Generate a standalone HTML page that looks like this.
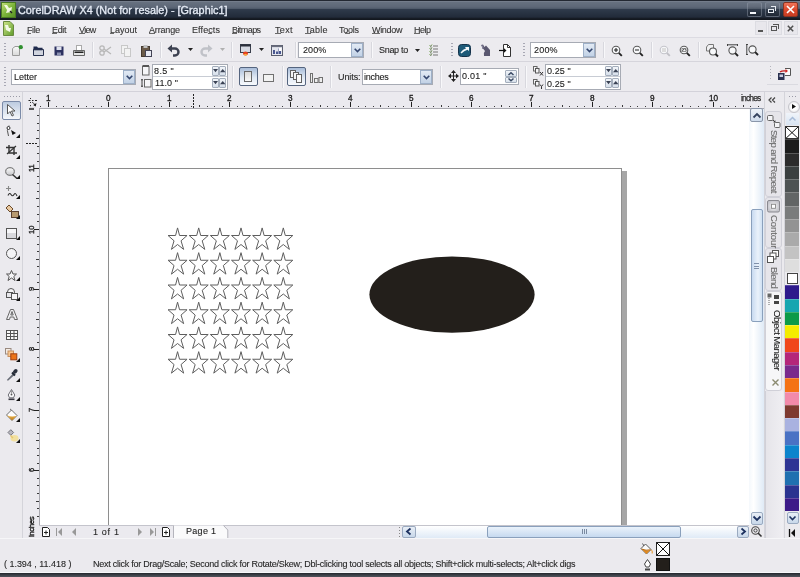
<!DOCTYPE html><html><head><meta charset="utf-8"><style>
*{box-sizing:border-box}
html,body{margin:0;padding:0}
body{width:800px;height:577px;overflow:hidden;position:relative;background:#ebeaee;font-family:"Liberation Sans",sans-serif;font-size:9px;color:#000}
.ab{position:absolute}
.t{position:absolute;white-space:nowrap;line-height:1;-webkit-font-smoothing:antialiased;will-change:transform;-webkit-text-stroke-width:0.1px}
svg{position:absolute;overflow:visible}
</style></head><body>
<div class="ab" style="left:0px;top:0px;width:800px;height:20px;background:linear-gradient(#232832 0,#232832 1px,#7b8391 1px,#66707f 2.5px,#5d6777 7px,#505b6b 8.5px,#2f3a4b 9.5px,#2a3545 12px,#222b3a 17px,#161b24 18.5px,#12161d 20px)"></div>
<div class="ab" style="left:1px;top:2px;width:15px;height:16px;background:linear-gradient(135deg,#c3e07a,#7cb43a 50%,#5a9428);border:1px solid #4a7a22"></div>
<svg style="left:3px;top:4px" width="11" height="11" viewBox="0 0 11 11"><path d="M1 1 L4 1 L6 4 L9 3 L8 8 L3 9 L4 6z" fill="#f2f9e0"/><path d="M7 7 L9 9" stroke="#222" stroke-width="1.5"/></svg>
<div class="t" style="left:17.50px;top:5.30px;font-size:10.8px;color:#e4eaf4;letter-spacing:0.012px;font-weight:normal;-webkit-text-stroke:0.35px #e4eaf4">CorelDRAW X4 (Not for resale) - [Graphic1]</div>
<div class="ab" style="left:747px;top:2px;width:15px;height:15px;border:1px solid rgba(150,160,175,0.45);border-radius:2px;background:linear-gradient(rgba(255,255,255,0.06),rgba(0,0,0,0.12))"></div>
<div class="ab" style="left:765px;top:2px;width:15px;height:15px;border:1px solid rgba(150,160,175,0.45);border-radius:2px;background:linear-gradient(rgba(255,255,255,0.06),rgba(0,0,0,0.12))"></div>
<div class="ab" style="left:750px;top:12px;width:6px;height:2px;background:#f4f6fa"></div>
<div class="ab" style="left:768px;top:8.5px;width:6px;height:4.5px;border:1.3px solid #e6eaf0"></div>
<div class="ab" style="left:770.5px;top:6px;width:5.5px;height:5px;border-top:1.3px solid #e6eaf0;border-right:1.3px solid #e6eaf0"></div>
<div class="ab" style="left:783px;top:2px;width:15px;height:15px;border:1px solid #8a3422;border-radius:2px;background:linear-gradient(#f07458,#dc4a2e 50%,#c83c22)"></div>
<svg style="left:786px;top:5px" width="9" height="9" viewBox="0 0 9 9"><path d="M1 1 L8 8 M8 1 L1 8" stroke="#fff" stroke-width="1.6"/></svg>
<div class="ab" style="left:0px;top:20px;width:800px;height:17px;background:#efeef2"></div>
<div class="ab" style="left:0px;top:37px;width:800px;height:1px;background:#dcdbe2"></div>
<svg style="left:3px;top:21px" width="11" height="15" viewBox="0 0 11 15"><defs><linearGradient id="mg" x1="0" y1="0" x2="1" y2="1"><stop offset="0" stop-color="#cfe68a"/><stop offset="1" stop-color="#5e9a2a"/></linearGradient></defs><path d="M0.5 0.5 H7 L10.5 4 V14.5 H0.5z" fill="url(#mg)" stroke="#6a8a40"/><path d="M2 4 L5 4 L6 7 L8 7 L7 11 L3 9z" fill="#f4fae6"/></svg>
<div class="t" style="left:26.60px;top:25.60px;font-size:9px;color:#333;letter-spacing:-0.400px;font-weight:normal;">File</div>
<div class="t" style="left:52.20px;top:25.60px;font-size:9px;color:#333;letter-spacing:-0.317px;font-weight:normal;">Edit</div>
<div class="t" style="left:79.00px;top:25.60px;font-size:9px;color:#333;letter-spacing:-0.667px;font-weight:normal;">View</div>
<div class="t" style="left:109.60px;top:25.60px;font-size:9px;color:#333;letter-spacing:0.000px;font-weight:normal;">Layout</div>
<div class="t" style="left:149.00px;top:25.60px;font-size:9px;color:#333;letter-spacing:-0.167px;font-weight:normal;">Arrange</div>
<div class="t" style="left:192.40px;top:25.60px;font-size:9px;color:#333;letter-spacing:0.100px;font-weight:normal;">Effects</div>
<div class="t" style="left:232.40px;top:25.60px;font-size:9px;color:#333;letter-spacing:-0.567px;font-weight:normal;">Bitmaps</div>
<div class="t" style="left:275.00px;top:25.60px;font-size:9px;color:#333;letter-spacing:0.333px;font-weight:normal;">Text</div>
<div class="t" style="left:305.00px;top:25.60px;font-size:9px;color:#333;letter-spacing:0.250px;font-weight:normal;">Table</div>
<div class="t" style="left:339.00px;top:25.60px;font-size:9px;color:#333;letter-spacing:-0.250px;font-weight:normal;">Tools</div>
<div class="t" style="left:371.60px;top:25.60px;font-size:9px;color:#333;letter-spacing:-0.320px;font-weight:normal;">Window</div>
<div class="t" style="left:414.40px;top:25.60px;font-size:9px;color:#333;letter-spacing:-0.467px;font-weight:normal;">Help</div>
<div class="ab" style="left:26.6px;top:33.4px;width:4.899999999999999px;height:1.1px;background:#6a6a6a"></div>
<div class="ab" style="left:52.2px;top:33.4px;width:4.799999999999997px;height:1.1px;background:#6a6a6a"></div>
<div class="ab" style="left:79px;top:33.4px;width:6px;height:1.1px;background:#6a6a6a"></div>
<div class="ab" style="left:109.6px;top:33.4px;width:4.900000000000006px;height:1.1px;background:#6a6a6a"></div>
<div class="ab" style="left:149px;top:33.4px;width:6px;height:1.1px;background:#6a6a6a"></div>
<div class="ab" style="left:208px;top:33.4px;width:4px;height:1.1px;background:#6a6a6a"></div>
<div class="ab" style="left:232.4px;top:33.4px;width:4.599999999999994px;height:1.1px;background:#6a6a6a"></div>
<div class="ab" style="left:275px;top:33.4px;width:5.5px;height:1.1px;background:#6a6a6a"></div>
<div class="ab" style="left:305px;top:33.4px;width:5.5px;height:1.1px;background:#6a6a6a"></div>
<div class="ab" style="left:345px;top:33.4px;width:4.5px;height:1.1px;background:#6a6a6a"></div>
<div class="ab" style="left:371.6px;top:33.4px;width:8.399999999999977px;height:1.1px;background:#6a6a6a"></div>
<div class="ab" style="left:414.4px;top:33.4px;width:5.600000000000023px;height:1.1px;background:#6a6a6a"></div>
<div class="ab" style="left:755px;top:21px;width:12px;height:14px;background:#e8e7ec;border:1px solid #dcdce2"></div>
<div class="ab" style="left:758px;top:30px;width:4.5px;height:1.5px;background:#555"></div>
<div class="ab" style="left:768px;top:21px;width:13.5px;height:14px;background:#e8e7ec;border:1px solid #dcdce2"></div>
<div class="ab" style="left:771px;top:26px;width:6px;height:4.5px;border:1px solid #555;border-top-width:1.6px"></div>
<div class="ab" style="left:773px;top:23.5px;width:5.5px;height:5px;border-top:1.2px solid #555;border-right:1px solid #555"></div>
<div class="ab" style="left:784px;top:21px;width:13.5px;height:14px;background:#e8e7ec;border:1px solid #dcdce2"></div>
<svg style="left:787px;top:24.5px" width="7" height="7" viewBox="0 0 7 7"><path d="M0.8 0.8 L6.2 6.2 M6.2 0.8 L0.8 6.2" stroke="#505050" stroke-width="1.5"/></svg>
<div class="ab" style="left:0px;top:38px;width:800px;height:23px;background:#ecebef"></div>
<div class="ab" style="left:0px;top:61px;width:800px;height:1px;background:#d6d5dc"></div>
<div class="ab" style="left:4px;top:43px;width:1.5px;height:1px;background:#a8a8b4"></div>
<div class="ab" style="left:4px;top:46px;width:1.5px;height:1px;background:#a8a8b4"></div>
<div class="ab" style="left:4px;top:49px;width:1.5px;height:1px;background:#a8a8b4"></div>
<div class="ab" style="left:4px;top:52px;width:1.5px;height:1px;background:#a8a8b4"></div>
<div class="ab" style="left:4px;top:55px;width:1.5px;height:1px;background:#a8a8b4"></div>
<svg style="left:12px;top:45px" width="11" height="11" viewBox="0 0 11 11"><defs><linearGradient id="ng" x1="0" y1="0" x2="0" y2="1"><stop offset="0" stop-color="#fafafa"/><stop offset="1" stop-color="#d8d8d8"/></linearGradient></defs><path d="M0.5 3.5 L3 1.5 H7.5 V10.5 H0.5z" fill="url(#ng)" stroke="#9a9a9a"/><circle cx="8.8" cy="2.2" r="2.1" fill="#2f8f2f"/></svg>
<svg style="left:33px;top:46px" width="11" height="10" viewBox="0 0 11 10"><path d="M0.5 0.5 H4 L5 1.8 H9.5 V4 H0.5z" fill="#1f2a4e"/><path d="M0.5 3.5 H10.5 V9.5 H0.5z" fill="#d0d4de" stroke="#27304e"/><path d="M0.5 3.5 H9.5" stroke="#27304e" stroke-width="1.6"/></svg>
<svg style="left:53.5px;top:46px" width="10" height="10" viewBox="0 0 10 10"><rect x="0.5" y="0.5" width="9" height="9" fill="#2c3160"/><rect x="2.5" y="0.5" width="5" height="3.5" fill="#dfe2ee"/><rect x="3" y="6.5" width="4" height="3" fill="#8a90b0"/></svg>
<svg style="left:73px;top:45px" width="12" height="11" viewBox="0 0 12 11"><rect x="3.5" y="0.5" width="5" height="5" fill="#fff" stroke="#aaa"/><path d="M0.5 5.5 H11.5 V10.5 H0.5z" fill="#e6e6e6" stroke="#666"/><rect x="1.5" y="6.5" width="9" height="1.5" fill="#222"/></svg>
<div class="ab" style="left:92px;top:42px;width:1px;height:16px;background:#d8d8de"></div>
<div class="ab" style="left:93px;top:42px;width:1px;height:16px;background:#f8f8fa"></div>
<svg style="left:99px;top:45px" width="13" height="11" viewBox="0 0 13 11"><circle cx="3" cy="8" r="2.2" fill="none" stroke="#b8b8b8" stroke-width="1.3"/><circle cx="3" cy="3" r="2.2" fill="none" stroke="#b8b8b8" stroke-width="1.3"/><path d="M5 7 L12 2 M5 4 L12 9" stroke="#b8b8b8" stroke-width="1.3"/></svg>
<svg style="left:121px;top:45px" width="11" height="12" viewBox="0 0 11 12"><rect x="0.5" y="0.5" width="6" height="8" fill="#f2f2f2" stroke="#c8c8c8"/><rect x="3.5" y="3.5" width="6" height="8" fill="#f2f2f2" stroke="#c8c8c8"/></svg>
<svg style="left:141px;top:45px" width="11" height="12" viewBox="0 0 11 12"><rect x="0.5" y="1.5" width="8" height="10" fill="#6a5a48" stroke="#443a30"/><rect x="2.5" y="0" width="4" height="3" fill="#c0c0c0"/><rect x="4.5" y="5.5" width="6" height="6" fill="#e8eaf2" stroke="#445"/></svg>
<div class="ab" style="left:160px;top:42px;width:1px;height:16px;background:#d8d8de"></div>
<div class="ab" style="left:161px;top:42px;width:1px;height:16px;background:#f8f8fa"></div>
<svg style="left:167px;top:44px" width="13" height="13" viewBox="0 0 13 13"><path d="M4 4.5 H8 A3.5 3.5 0 0 1 8 11.5 H6" fill="none" stroke="#3c4150" stroke-width="2.4"/><path d="M0.5 4.5 L5 0.5 V8.5z" fill="#3c4150"/></svg>
<svg style="left:188px;top:48px" width="5" height="3" viewBox="0 0 5 3"><path d="M0 0 H5 L2.5 3z" fill="#222"/></svg>
<svg style="left:200px;top:44px" width="13" height="13" viewBox="0 0 13 13"><path d="M9 4.5 H5 A3.5 3.5 0 0 0 5 11.5 H7" fill="none" stroke="#c0c2c8" stroke-width="2.4"/><path d="M12.5 4.5 L8 0.5 V8.5z" fill="#c0c2c8"/></svg>
<svg style="left:220px;top:48px" width="5" height="3" viewBox="0 0 5 3"><path d="M0 0 H5 L2.5 3z" fill="#b0b0b0"/></svg>
<div class="ab" style="left:231px;top:42px;width:1px;height:16px;background:#d8d8de"></div>
<div class="ab" style="left:232px;top:42px;width:1px;height:16px;background:#f8f8fa"></div>
<svg style="left:239.5px;top:44px" width="11" height="12" viewBox="0 0 11 12"><rect x="0.5" y="0.5" width="10" height="8" fill="#d6d9e2" stroke="#3a3f4c"/><rect x="0.5" y="0.5" width="10" height="2" fill="#2a2f3a"/><ellipse cx="5.5" cy="9.5" rx="2.5" ry="2" fill="#e8401c"/><ellipse cx="5.5" cy="10.8" rx="1.5" ry="1" fill="#f4b040"/></svg>
<svg style="left:259px;top:48px" width="5" height="3" viewBox="0 0 5 3"><path d="M0 0 H5 L2.5 3z" fill="#222"/></svg>
<svg style="left:271px;top:45px" width="12" height="11" viewBox="0 0 12 11"><rect x="0.5" y="0.5" width="11" height="10" fill="#e4e6ee" stroke="#5a5e6e"/><rect x="0.5" y="0.5" width="11" height="1.6" fill="#6a6e7e"/><path d="M2 9 V5 H4 V9 M5 9 V6.5 H7 V9 M7.5 9 V3.5 H10 V9" fill="#4a5890"/><rect x="8" y="3" width="2.5" height="3" fill="#fff"/></svg>
<div class="ab" style="left:295px;top:42px;width:1px;height:16px;background:#d8d8de"></div>
<div class="ab" style="left:296px;top:42px;width:1px;height:16px;background:#f8f8fa"></div>
<div class="ab" style="left:298px;top:42px;width:66px;height:16px;background:#fff;border:1px solid #a7abb4"></div>
<div class="ab" style="left:351px;top:43px;width:12px;height:14px;background:linear-gradient(#e2eaf4,#c2d2e6);border:1px solid #9eb0c8"></div>
<svg style="left:354px;top:48.0px" width="7" height="5" viewBox="0 0 7 5"><path d="M0.7 0.7 L3.5 3.5 L6.3 0.7" fill="none" stroke="#34466e" stroke-width="1.6"/></svg>
<div class="t" style="left:302.50px;top:45.80px;font-size:9px;color:#1a1a1a;letter-spacing:0.100px;font-weight:normal;">200%</div>
<div class="ab" style="left:371px;top:42px;width:1px;height:16px;background:#d8d8de"></div>
<div class="ab" style="left:372px;top:42px;width:1px;height:16px;background:#f8f8fa"></div>
<div class="t" style="left:378.80px;top:46.00px;font-size:9px;color:#262626;letter-spacing:-0.300px;font-weight:normal;">Snap to</div>
<svg style="left:415px;top:49px" width="5" height="3" viewBox="0 0 5 3"><path d="M0 0 H5 L2.5 3z" fill="#222"/></svg>
<svg style="left:429px;top:44px" width="10" height="13" viewBox="0 0 10 13"><path d="M0.5 1.5 L1.5 2.5 L3 0.5 M0.5 4.5 L1.5 5.5 L3 3.5 M0.5 7.5 L1.5 8.5 L3 6.5 M0.5 10.5 L1.5 11.5 L3 9.5" fill="none" stroke="#6aa040" stroke-width="1"/><path d="M2 1 V12" stroke="#888" stroke-width="0.8"/><path d="M4 2 h5 M4 5 h5 M4 8 h5 M4 11 h5" stroke="#777" stroke-width="1.1"/></svg>
<div class="ab" style="left:451px;top:43px;width:1.5px;height:1px;background:#a8a8b4"></div>
<div class="ab" style="left:451px;top:46px;width:1.5px;height:1px;background:#a8a8b4"></div>
<div class="ab" style="left:451px;top:49px;width:1.5px;height:1px;background:#a8a8b4"></div>
<div class="ab" style="left:451px;top:52px;width:1.5px;height:1px;background:#a8a8b4"></div>
<div class="ab" style="left:451px;top:55px;width:1.5px;height:1px;background:#a8a8b4"></div>
<svg style="left:458px;top:44px" width="13" height="13" viewBox="0 0 13 13"><rect x="0.5" y="0.5" width="12" height="12" rx="3" fill="#1d5a78" stroke="#15324a"/><path d="M2.5 8.5 Q5 5 8 4.5 L7 3 H11 V7 L9.5 5.8 Q6 7 3.5 9.5z" fill="#f4f8fa"/></svg>
<svg style="left:480px;top:44px" width="11" height="13" viewBox="0 0 11 13"><path d="M1 1 L3 0.5 L4.5 3 L6 1.5 L10 6 V12 H4 Q3 9 5 7 L2.5 4z" fill="#5a5870"/><path d="M1.5 1 Q4 3 2.5 5" fill="none" stroke="#8a88a0"/></svg>
<svg style="left:499px;top:44px" width="12" height="13" viewBox="0 0 12 13"><path d="M4.5 0.5 h4 l3 3 v9 h-7z" fill="#fff" stroke="#333"/><path d="M8.5 0.5 V3.5 H11.5" fill="none" stroke="#333"/><path d="M0 6.5 H6" stroke="#111" stroke-width="1.2"/><path d="M5 4.3 L7.5 6.5 L5 8.7z" fill="#111"/></svg>
<div class="ab" style="left:523px;top:43px;width:1.5px;height:1px;background:#a8a8b4"></div>
<div class="ab" style="left:523px;top:46px;width:1.5px;height:1px;background:#a8a8b4"></div>
<div class="ab" style="left:523px;top:49px;width:1.5px;height:1px;background:#a8a8b4"></div>
<div class="ab" style="left:523px;top:52px;width:1.5px;height:1px;background:#a8a8b4"></div>
<div class="ab" style="left:523px;top:55px;width:1.5px;height:1px;background:#a8a8b4"></div>
<div class="ab" style="left:530px;top:42px;width:66px;height:16px;background:#fff;border:1px solid #a7abb4"></div>
<div class="ab" style="left:583px;top:43px;width:12px;height:14px;background:linear-gradient(#e2eaf4,#c2d2e6);border:1px solid #9eb0c8"></div>
<svg style="left:586px;top:48.0px" width="7" height="5" viewBox="0 0 7 5"><path d="M0.7 0.7 L3.5 3.5 L6.3 0.7" fill="none" stroke="#34466e" stroke-width="1.6"/></svg>
<div class="t" style="left:534.40px;top:45.80px;font-size:9px;color:#1a1a1a;letter-spacing:0.200px;font-weight:normal;">200%</div>
<div class="ab" style="left:603px;top:42px;width:1px;height:16px;background:#d8d8de"></div>
<div class="ab" style="left:604px;top:42px;width:1px;height:16px;background:#f8f8fa"></div>
<svg style="left:611px;top:45px" width="12" height="12" viewBox="0 0 12 12"><circle cx="5" cy="5" r="3.8" fill="#f7f8fa" stroke="#5a5a5a" stroke-width="1.1"/><path d="M7.8 7.8 L10.8 10.8" stroke="#222" stroke-width="1.9"/><path d="M3 5 h4 M5 3 v4" stroke="#222" stroke-width="1.1"/></svg>
<svg style="left:632px;top:45px" width="12" height="12" viewBox="0 0 12 12"><circle cx="5" cy="5" r="3.8" fill="#f7f8fa" stroke="#5a5a5a" stroke-width="1.1"/><path d="M7.8 7.8 L10.8 10.8" stroke="#222" stroke-width="1.9"/><path d="M3 5 h4" stroke="#333" stroke-width="1.1"/></svg>
<div class="ab" style="left:651px;top:42px;width:1px;height:16px;background:#d8d8de"></div>
<div class="ab" style="left:652px;top:42px;width:1px;height:16px;background:#f8f8fa"></div>
<svg style="left:659px;top:45px" width="12" height="12" viewBox="0 0 12 12"><circle cx="5" cy="5" r="3.8" fill="#f7f8fa" stroke="#c4c4ca" stroke-width="1.1"/><path d="M7.8 7.8 L10.8 10.8" stroke="#c0c0c6" stroke-width="1.9"/><rect x="3" y="3" width="4" height="4" fill="#ddd"/></svg>
<svg style="left:679px;top:45px" width="12" height="12" viewBox="0 0 12 12"><circle cx="5" cy="5" r="3.8" fill="#f7f8fa" stroke="#5a5a5a" stroke-width="1.1"/><path d="M7.8 7.8 L10.8 10.8" stroke="#222" stroke-width="1.9"/><path d="M2.8 6.5 L5.5 3.5 L7.2 5.5" fill="none" stroke="#555" stroke-width="1"/><rect x="3" y="3.5" width="4" height="3" fill="none" stroke="#777" stroke-width="0.8"/></svg>
<div class="ab" style="left:698px;top:42px;width:1px;height:16px;background:#d8d8de"></div>
<div class="ab" style="left:699px;top:42px;width:1px;height:16px;background:#f8f8fa"></div>
<svg style="left:706px;top:44px" width="13" height="13" viewBox="0 0 13 13"><path d="M0.5 3 L2.5 0.5 H7.5 V7 H0.5z" fill="#f0f0f2" stroke="#777"/><circle cx="7" cy="7.5" r="3.5" fill="#f7f8fa" stroke="#555" stroke-width="1.1"/><path d="M9.5 10 L12 12.5" stroke="#222" stroke-width="1.9"/></svg>
<svg style="left:727px;top:44px" width="12" height="13" viewBox="0 0 12 13"><path d="M0.5 0.8 H10.5 M0.5 0 V2 M10.5 0 V2" stroke="#444" stroke-width="1"/><circle cx="5.5" cy="6.5" r="3.6" fill="#f7f8fa" stroke="#555" stroke-width="1.1"/><path d="M8.2 9.2 L11 12" stroke="#222" stroke-width="1.9"/></svg>
<svg style="left:746px;top:44px" width="13" height="13" viewBox="0 0 13 13"><path d="M0.8 0.5 V10.5 M0 0.5 H2 M0 10.5 H2" stroke="#444" stroke-width="1"/><circle cx="6.5" cy="5.5" r="3.6" fill="#f7f8fa" stroke="#555" stroke-width="1.1"/><path d="M9.2 8.2 L12 11" stroke="#222" stroke-width="1.9"/></svg>
<div class="ab" style="left:0px;top:62px;width:800px;height:29px;background:#ecebef"></div>
<div class="ab" style="left:0px;top:91px;width:800px;height:1px;background:#d3d2da"></div>
<div class="ab" style="left:4px;top:67px;width:1.5px;height:1px;background:#a8a8b4"></div>
<div class="ab" style="left:4px;top:70px;width:1.5px;height:1px;background:#a8a8b4"></div>
<div class="ab" style="left:4px;top:73px;width:1.5px;height:1px;background:#a8a8b4"></div>
<div class="ab" style="left:4px;top:76px;width:1.5px;height:1px;background:#a8a8b4"></div>
<div class="ab" style="left:4px;top:79px;width:1.5px;height:1px;background:#a8a8b4"></div>
<div class="ab" style="left:4px;top:82px;width:1.5px;height:1px;background:#a8a8b4"></div>
<div class="ab" style="left:4px;top:85px;width:1.5px;height:1px;background:#a8a8b4"></div>
<div class="ab" style="left:11px;top:69px;width:125px;height:16px;background:#fff;border:1px solid #a7abb4"></div>
<div class="ab" style="left:123px;top:70px;width:12px;height:14px;background:linear-gradient(#e2eaf4,#c2d2e6);border:1px solid #9eb0c8"></div>
<svg style="left:126px;top:75.0px" width="7" height="5" viewBox="0 0 7 5"><path d="M0.7 0.7 L3.5 3.5 L6.3 0.7" fill="none" stroke="#34466e" stroke-width="1.6"/></svg>
<div class="t" style="left:13.50px;top:73.00px;font-size:9px;color:#1a1a1a;letter-spacing:0.020px;font-weight:normal;">Letter</div>
<svg style="left:142px;top:65px" width="8" height="10" viewBox="0 0 8 10"><rect x="0.5" y="1.5" width="6.5" height="8.5" fill="#f6f6f8" stroke="#666"/><path d="M0.5 1 H7" stroke="#555" stroke-width="2"/></svg>
<svg style="left:141px;top:79px" width="10" height="8" viewBox="0 0 10 8"><path d="M1 0 V8 M0 0.8 H2 M0 7.2 H2" stroke="#444"/><rect x="3.5" y="0.5" width="6.5" height="7.5" fill="#f6f6f8" stroke="#666"/></svg>
<div class="ab" style="left:152px;top:64px;width:76px;height:26px;background:#fff;border:1px solid #a7abb4"></div>
<div class="ab" style="left:153px;top:76px;width:74px;height:1px;background:#c8ccd4"></div>
<div class="t" style="left:154.00px;top:67.20px;font-size:9px;color:#1a1a1a;letter-spacing:0.400px;font-weight:normal;">8.5 &quot;</div>
<div class="t" style="left:155.20px;top:79.00px;font-size:9px;color:#1a1a1a;letter-spacing:0.080px;font-weight:normal;">11.0 &quot;</div>
<div class="ab" style="left:212px;top:66px;width:6.5px;height:10px;background:linear-gradient(#f2f5f9,#d6dfea);border:1px solid #a4aebc;border-radius:1px"></div>
<svg style="left:212.75px;top:69.4px" width="5.0" height="3.2" viewBox="0 0 5.0 3.2"><path d="M0 0 L2.5 3.2 L5.0 0z" fill="#3a4254"/></svg>
<div class="ab" style="left:219.3px;top:66px;width:7px;height:10px;background:linear-gradient(#f2f5f9,#d6dfea);border:1px solid #a4aebc;border-radius:1px"></div>
<svg style="left:220.05px;top:69.4px" width="5.5" height="3.2" viewBox="0 0 5.5 3.2"><path d="M0 3.2 L2.75 0 L5.5 3.2 z" fill="#3a4254"/></svg>
<div class="ab" style="left:212px;top:78px;width:6.5px;height:10px;background:linear-gradient(#f2f5f9,#d6dfea);border:1px solid #a4aebc;border-radius:1px"></div>
<svg style="left:212.75px;top:81.4px" width="5.0" height="3.2" viewBox="0 0 5.0 3.2"><path d="M0 0 L2.5 3.2 L5.0 0z" fill="#3a4254"/></svg>
<div class="ab" style="left:219.3px;top:78px;width:7px;height:10px;background:linear-gradient(#f2f5f9,#d6dfea);border:1px solid #a4aebc;border-radius:1px"></div>
<svg style="left:220.05px;top:81.4px" width="5.5" height="3.2" viewBox="0 0 5.5 3.2"><path d="M0 3.2 L2.75 0 L5.5 3.2 z" fill="#3a4254"/></svg>
<div class="ab" style="left:232px;top:66px;width:1px;height:22px;background:#d8d8de"></div>
<div class="ab" style="left:233px;top:66px;width:1px;height:22px;background:#f8f8fa"></div>
<div class="ab" style="left:239px;top:67px;width:19px;height:19px;background:linear-gradient(#a9bdd9,#dfe8f3 55%,#f8fafd);border:1.6px solid #55657f;border-radius:2px"></div>
<svg style="left:244px;top:71px" width="8" height="11" viewBox="0 0 8 11"><defs><linearGradient id="pg" x1="0" y1="0" x2="0" y2="1"><stop offset="0" stop-color="#d8d8d8"/><stop offset="1" stop-color="#fafafa"/></linearGradient></defs><rect x="0.5" y="0.5" width="7" height="10" fill="url(#pg)" stroke="#6a6a6a"/></svg>
<svg style="left:263px;top:74px" width="11" height="8" viewBox="0 0 11 8"><rect x="0.5" y="0.5" width="10" height="7" fill="#f2f2f2" stroke="#707070"/></svg>
<div class="ab" style="left:282px;top:66px;width:1px;height:22px;background:#d8d8de"></div>
<div class="ab" style="left:283px;top:66px;width:1px;height:22px;background:#f8f8fa"></div>
<div class="ab" style="left:287px;top:67px;width:19px;height:19px;background:linear-gradient(#a9bdd9,#dfe8f3 55%,#f8fafd);border:1.6px solid #55657f;border-radius:2px"></div>
<svg style="left:290px;top:70px" width="13" height="13" viewBox="0 0 13 13"><rect x="0.5" y="0.5" width="5" height="7" fill="#f4f4f4" stroke="#606060"/><rect x="3.5" y="2.5" width="5" height="7" fill="#f4f4f4" stroke="#606060"/><rect x="6.5" y="4.5" width="5" height="8" fill="#f8f8f8" stroke="#606060"/></svg>
<svg style="left:310px;top:73px" width="13" height="10" viewBox="0 0 13 10"><rect x="0.5" y="0.5" width="2" height="9" fill="#eee" stroke="#707070"/><rect x="4.5" y="5.5" width="3.5" height="4" fill="#eee" stroke="#707070"/><rect x="9" y="4.5" width="3.5" height="5" fill="#eee" stroke="#707070"/></svg>
<div class="ab" style="left:330px;top:66px;width:1px;height:22px;background:#d8d8de"></div>
<div class="ab" style="left:331px;top:66px;width:1px;height:22px;background:#f8f8fa"></div>
<div class="t" style="left:337.60px;top:73.10px;font-size:9px;color:#262626;letter-spacing:-0.080px;font-weight:normal;">Units:</div>
<div class="ab" style="left:362px;top:69px;width:71px;height:16px;background:#fff;border:1px solid #a7abb4"></div>
<div class="ab" style="left:420px;top:70px;width:12px;height:14px;background:linear-gradient(#e2eaf4,#c2d2e6);border:1px solid #9eb0c8"></div>
<svg style="left:423px;top:75.0px" width="7" height="5" viewBox="0 0 7 5"><path d="M0.7 0.7 L3.5 3.5 L6.3 0.7" fill="none" stroke="#34466e" stroke-width="1.6"/></svg>
<div class="t" style="left:364.10px;top:73.40px;font-size:9px;color:#1a1a1a;letter-spacing:-0.260px;font-weight:normal;">inches</div>
<div class="ab" style="left:440px;top:66px;width:1px;height:22px;background:#d8d8de"></div>
<div class="ab" style="left:441px;top:66px;width:1px;height:22px;background:#f8f8fa"></div>
<svg style="left:448px;top:70px" width="11" height="12" viewBox="0 0 11 12"><path d="M5.5 0 L8 3 H3z M5.5 12 L8 9 H3z M0 6 L3 3.5 V8.5z M11 6 L8 3.5 V8.5z" fill="#222"/><path d="M5.5 2 V10 M2 6 H9" stroke="#222"/></svg>
<div class="ab" style="left:460px;top:68px;width:59px;height:17px;background:#fff;border:1px solid #a7abb4"></div>
<div class="t" style="left:461.80px;top:72.00px;font-size:9px;color:#1a1a1a;letter-spacing:0.240px;font-weight:normal;">0.01 &quot;</div>
<div class="ab" style="left:504.5px;top:70px;width:12px;height:6.5px;background:linear-gradient(#f2f5f9,#d6dfea);border:1px solid #a4aebc;border-radius:1px"></div>
<div class="ab" style="left:504.5px;top:76.5px;width:12px;height:6.5px;background:linear-gradient(#f2f5f9,#d6dfea);border:1px solid #a4aebc;border-radius:1px"></div>
<svg style="left:507.5px;top:71.5px" width="6" height="3.5" viewBox="0 0 6 3.5"><path d="M0.5 3 L3 0.7 L5.5 3" fill="none" stroke="#3a4a64" stroke-width="1.5"/></svg>
<svg style="left:507.5px;top:78px" width="6" height="3.5" viewBox="0 0 6 3.5"><path d="M0.5 0.5 L3 2.8 L5.5 0.5" fill="none" stroke="#3a4a64" stroke-width="1.5"/></svg>
<div class="ab" style="left:525px;top:66px;width:1px;height:22px;background:#d8d8de"></div>
<div class="ab" style="left:526px;top:66px;width:1px;height:22px;background:#f8f8fa"></div>
<svg style="left:533px;top:66px" width="11" height="10" viewBox="0 0 11 10"><rect x="0.5" y="0.5" width="3.5" height="4.5" fill="#f4f4f6" stroke="#666"/><rect x="2.5" y="2.5" width="3.5" height="4.5" fill="#f4f4f6" stroke="#555"/><path d="M7 6 L10 9.5 M10 6 L7 9.5" stroke="#333"/></svg>
<svg style="left:533px;top:79px" width="11" height="10" viewBox="0 0 11 10"><rect x="0.5" y="0.5" width="3.5" height="4.5" fill="#f4f4f6" stroke="#666"/><rect x="2.5" y="2.5" width="3.5" height="4.5" fill="#f4f4f6" stroke="#555"/><path d="M7 5.5 L8.5 7.5 L10 5.5 M8.5 7.5 V10" fill="none" stroke="#333"/></svg>
<div class="ab" style="left:545px;top:64px;width:76px;height:26px;background:#fff;border:1px solid #a7abb4"></div>
<div class="ab" style="left:546px;top:76px;width:74px;height:1px;background:#c8ccd4"></div>
<div class="t" style="left:547.40px;top:67.25px;font-size:9px;color:#1a1a1a;letter-spacing:0.100px;font-weight:normal;">0.25 &quot;</div>
<div class="t" style="left:547.40px;top:79.75px;font-size:9px;color:#1a1a1a;letter-spacing:0.100px;font-weight:normal;">0.25 &quot;</div>
<div class="ab" style="left:605px;top:66px;width:6.5px;height:10px;background:linear-gradient(#f2f5f9,#d6dfea);border:1px solid #a4aebc;border-radius:1px"></div>
<svg style="left:605.75px;top:69.4px" width="5.0" height="3.2" viewBox="0 0 5.0 3.2"><path d="M0 0 L2.5 3.2 L5.0 0z" fill="#3a4254"/></svg>
<div class="ab" style="left:612.3px;top:66px;width:7px;height:10px;background:linear-gradient(#f2f5f9,#d6dfea);border:1px solid #a4aebc;border-radius:1px"></div>
<svg style="left:613.05px;top:69.4px" width="5.5" height="3.2" viewBox="0 0 5.5 3.2"><path d="M0 3.2 L2.75 0 L5.5 3.2 z" fill="#3a4254"/></svg>
<div class="ab" style="left:605px;top:78px;width:6.5px;height:10px;background:linear-gradient(#f2f5f9,#d6dfea);border:1px solid #a4aebc;border-radius:1px"></div>
<svg style="left:605.75px;top:81.4px" width="5.0" height="3.2" viewBox="0 0 5.0 3.2"><path d="M0 0 L2.5 3.2 L5.0 0z" fill="#3a4254"/></svg>
<div class="ab" style="left:612.3px;top:78px;width:7px;height:10px;background:linear-gradient(#f2f5f9,#d6dfea);border:1px solid #a4aebc;border-radius:1px"></div>
<svg style="left:613.05px;top:81.4px" width="5.5" height="3.2" viewBox="0 0 5.5 3.2"><path d="M0 3.2 L2.75 0 L5.5 3.2 z" fill="#3a4254"/></svg>
<div class="ab" style="left:770px;top:66px;width:1px;height:1px;background:#b4b4bc"></div>
<div class="ab" style="left:770px;top:69px;width:1px;height:1px;background:#b4b4bc"></div>
<div class="ab" style="left:770px;top:72px;width:1px;height:1px;background:#b4b4bc"></div>
<div class="ab" style="left:770px;top:75px;width:1px;height:1px;background:#b4b4bc"></div>
<div class="ab" style="left:770px;top:78px;width:1px;height:1px;background:#b4b4bc"></div>
<svg style="left:777px;top:67px" width="15" height="14" viewBox="0 0 15 14"><path d="M8 1.5 H13.5 V8.5 H8" fill="#fafafa" stroke="#555"/><rect x="1" y="6" width="6.5" height="7" fill="#2a3150"/><rect x="2.5" y="7.5" width="3.5" height="2.5" fill="#c8cce0"/><path d="M3 5 Q5 3.5 9 4" fill="none" stroke="#c02020" stroke-width="1.5"/><path d="M8.5 2 L11 4 L8.5 6z" fill="#d02020"/></svg>
<div class="ab" style="left:767px;top:84px;width:31px;height:1px;background:#dadae0"></div>
<div class="ab" style="left:23px;top:92px;width:741px;height:16px;background:#ebeaef"></div>
<div class="ab" style="left:39px;top:108px;width:725px;height:1px;background:#a9a9b0"></div>
<div class="ab" style="left:47.5px;top:102px;width:1px;height:5px;background:#222"></div>
<div class="t" style="left:46.00px;top:95.20px;font-size:8.2px;color:#1a1a1a;letter-spacing:0.000px;font-weight:normal;-webkit-text-stroke-width:0.3px">1</div>
<div class="ab" style="left:107.5px;top:102px;width:1px;height:5px;background:#222"></div>
<div class="t" style="left:106.00px;top:95.20px;font-size:8.2px;color:#1a1a1a;letter-spacing:0.000px;font-weight:normal;-webkit-text-stroke-width:0.3px">0</div>
<div class="ab" style="left:168.5px;top:102px;width:1px;height:5px;background:#222"></div>
<div class="t" style="left:167.00px;top:95.20px;font-size:8.2px;color:#1a1a1a;letter-spacing:0.000px;font-weight:normal;-webkit-text-stroke-width:0.3px">1</div>
<div class="ab" style="left:228.5px;top:102px;width:1px;height:5px;background:#222"></div>
<div class="t" style="left:227.00px;top:95.20px;font-size:8.2px;color:#1a1a1a;letter-spacing:0.000px;font-weight:normal;-webkit-text-stroke-width:0.3px">2</div>
<div class="ab" style="left:289.5px;top:102px;width:1px;height:5px;background:#222"></div>
<div class="t" style="left:288.00px;top:95.20px;font-size:8.2px;color:#1a1a1a;letter-spacing:0.000px;font-weight:normal;-webkit-text-stroke-width:0.3px">3</div>
<div class="ab" style="left:349.5px;top:102px;width:1px;height:5px;background:#222"></div>
<div class="t" style="left:348.00px;top:95.20px;font-size:8.2px;color:#1a1a1a;letter-spacing:0.000px;font-weight:normal;-webkit-text-stroke-width:0.3px">4</div>
<div class="ab" style="left:410.5px;top:102px;width:1px;height:5px;background:#222"></div>
<div class="t" style="left:409.00px;top:95.20px;font-size:8.2px;color:#1a1a1a;letter-spacing:0.000px;font-weight:normal;-webkit-text-stroke-width:0.3px">5</div>
<div class="ab" style="left:470.5px;top:102px;width:1px;height:5px;background:#222"></div>
<div class="t" style="left:469.00px;top:95.20px;font-size:8.2px;color:#1a1a1a;letter-spacing:0.000px;font-weight:normal;-webkit-text-stroke-width:0.3px">6</div>
<div class="ab" style="left:530.5px;top:102px;width:1px;height:5px;background:#222"></div>
<div class="t" style="left:529.00px;top:95.20px;font-size:8.2px;color:#1a1a1a;letter-spacing:0.000px;font-weight:normal;-webkit-text-stroke-width:0.3px">7</div>
<div class="ab" style="left:591.5px;top:102px;width:1px;height:5px;background:#222"></div>
<div class="t" style="left:590.00px;top:95.20px;font-size:8.2px;color:#1a1a1a;letter-spacing:0.000px;font-weight:normal;-webkit-text-stroke-width:0.3px">8</div>
<div class="ab" style="left:651.5px;top:102px;width:1px;height:5px;background:#222"></div>
<div class="t" style="left:650.00px;top:95.20px;font-size:8.2px;color:#1a1a1a;letter-spacing:0.000px;font-weight:normal;-webkit-text-stroke-width:0.3px">9</div>
<div class="ab" style="left:712.5px;top:102px;width:1px;height:5px;background:#222"></div>
<div class="t" style="left:708.50px;top:95.20px;font-size:8.2px;color:#1a1a1a;letter-spacing:0.000px;font-weight:normal;-webkit-text-stroke-width:0.3px">10</div>
<div class="ab" style="left:40px;top:106.0px;width:1px;height:1.3px;background:#3a3a3a"></div>
<div class="ab" style="left:56px;top:106.0px;width:1px;height:1.3px;background:#3a3a3a"></div>
<div class="ab" style="left:63px;top:105.7px;width:1px;height:1.6px;background:#3a3a3a"></div>
<div class="ab" style="left:71px;top:106.0px;width:1px;height:1.3px;background:#3a3a3a"></div>
<div class="ab" style="left:78px;top:104.8px;width:1px;height:2.5px;background:#3a3a3a"></div>
<div class="ab" style="left:86px;top:106.0px;width:1px;height:1.3px;background:#3a3a3a"></div>
<div class="ab" style="left:93px;top:105.7px;width:1px;height:1.6px;background:#3a3a3a"></div>
<div class="ab" style="left:101px;top:106.0px;width:1px;height:1.3px;background:#3a3a3a"></div>
<div class="ab" style="left:116px;top:106.0px;width:1px;height:1.3px;background:#3a3a3a"></div>
<div class="ab" style="left:124px;top:105.7px;width:1px;height:1.6px;background:#3a3a3a"></div>
<div class="ab" style="left:131px;top:106.0px;width:1px;height:1.3px;background:#3a3a3a"></div>
<div class="ab" style="left:139px;top:104.8px;width:1px;height:2.5px;background:#3a3a3a"></div>
<div class="ab" style="left:146px;top:106.0px;width:1px;height:1.3px;background:#3a3a3a"></div>
<div class="ab" style="left:154px;top:105.7px;width:1px;height:1.6px;background:#3a3a3a"></div>
<div class="ab" style="left:161px;top:106.0px;width:1px;height:1.3px;background:#3a3a3a"></div>
<div class="ab" style="left:176px;top:106.0px;width:1px;height:1.3px;background:#3a3a3a"></div>
<div class="ab" style="left:184px;top:105.7px;width:1px;height:1.6px;background:#3a3a3a"></div>
<div class="ab" style="left:191px;top:106.0px;width:1px;height:1.3px;background:#3a3a3a"></div>
<div class="ab" style="left:199px;top:104.8px;width:1px;height:2.5px;background:#3a3a3a"></div>
<div class="ab" style="left:207px;top:106.0px;width:1px;height:1.3px;background:#3a3a3a"></div>
<div class="ab" style="left:214px;top:105.7px;width:1px;height:1.6px;background:#3a3a3a"></div>
<div class="ab" style="left:222px;top:106.0px;width:1px;height:1.3px;background:#3a3a3a"></div>
<div class="ab" style="left:237px;top:106.0px;width:1px;height:1.3px;background:#3a3a3a"></div>
<div class="ab" style="left:244px;top:105.7px;width:1px;height:1.6px;background:#3a3a3a"></div>
<div class="ab" style="left:252px;top:106.0px;width:1px;height:1.3px;background:#3a3a3a"></div>
<div class="ab" style="left:259px;top:104.8px;width:1px;height:2.5px;background:#3a3a3a"></div>
<div class="ab" style="left:267px;top:106.0px;width:1px;height:1.3px;background:#3a3a3a"></div>
<div class="ab" style="left:275px;top:105.7px;width:1px;height:1.6px;background:#3a3a3a"></div>
<div class="ab" style="left:282px;top:106.0px;width:1px;height:1.3px;background:#3a3a3a"></div>
<div class="ab" style="left:297px;top:106.0px;width:1px;height:1.3px;background:#3a3a3a"></div>
<div class="ab" style="left:305px;top:105.7px;width:1px;height:1.6px;background:#3a3a3a"></div>
<div class="ab" style="left:312px;top:106.0px;width:1px;height:1.3px;background:#3a3a3a"></div>
<div class="ab" style="left:320px;top:104.8px;width:1px;height:2.5px;background:#3a3a3a"></div>
<div class="ab" style="left:327px;top:106.0px;width:1px;height:1.3px;background:#3a3a3a"></div>
<div class="ab" style="left:335px;top:105.7px;width:1px;height:1.6px;background:#3a3a3a"></div>
<div class="ab" style="left:343px;top:106.0px;width:1px;height:1.3px;background:#3a3a3a"></div>
<div class="ab" style="left:358px;top:106.0px;width:1px;height:1.3px;background:#3a3a3a"></div>
<div class="ab" style="left:365px;top:105.7px;width:1px;height:1.6px;background:#3a3a3a"></div>
<div class="ab" style="left:373px;top:106.0px;width:1px;height:1.3px;background:#3a3a3a"></div>
<div class="ab" style="left:380px;top:104.8px;width:1px;height:2.5px;background:#3a3a3a"></div>
<div class="ab" style="left:388px;top:106.0px;width:1px;height:1.3px;background:#3a3a3a"></div>
<div class="ab" style="left:395px;top:105.7px;width:1px;height:1.6px;background:#3a3a3a"></div>
<div class="ab" style="left:403px;top:106.0px;width:1px;height:1.3px;background:#3a3a3a"></div>
<div class="ab" style="left:418px;top:106.0px;width:1px;height:1.3px;background:#3a3a3a"></div>
<div class="ab" style="left:426px;top:105.7px;width:1px;height:1.6px;background:#3a3a3a"></div>
<div class="ab" style="left:433px;top:106.0px;width:1px;height:1.3px;background:#3a3a3a"></div>
<div class="ab" style="left:441px;top:104.8px;width:1px;height:2.5px;background:#3a3a3a"></div>
<div class="ab" style="left:448px;top:106.0px;width:1px;height:1.3px;background:#3a3a3a"></div>
<div class="ab" style="left:456px;top:105.7px;width:1px;height:1.6px;background:#3a3a3a"></div>
<div class="ab" style="left:463px;top:106.0px;width:1px;height:1.3px;background:#3a3a3a"></div>
<div class="ab" style="left:479px;top:106.0px;width:1px;height:1.3px;background:#3a3a3a"></div>
<div class="ab" style="left:486px;top:105.7px;width:1px;height:1.6px;background:#3a3a3a"></div>
<div class="ab" style="left:494px;top:106.0px;width:1px;height:1.3px;background:#3a3a3a"></div>
<div class="ab" style="left:501px;top:104.8px;width:1px;height:2.5px;background:#3a3a3a"></div>
<div class="ab" style="left:509px;top:106.0px;width:1px;height:1.3px;background:#3a3a3a"></div>
<div class="ab" style="left:516px;top:105.7px;width:1px;height:1.6px;background:#3a3a3a"></div>
<div class="ab" style="left:524px;top:106.0px;width:1px;height:1.3px;background:#3a3a3a"></div>
<div class="ab" style="left:539px;top:106.0px;width:1px;height:1.3px;background:#3a3a3a"></div>
<div class="ab" style="left:547px;top:105.7px;width:1px;height:1.6px;background:#3a3a3a"></div>
<div class="ab" style="left:554px;top:106.0px;width:1px;height:1.3px;background:#3a3a3a"></div>
<div class="ab" style="left:562px;top:104.8px;width:1px;height:2.5px;background:#3a3a3a"></div>
<div class="ab" style="left:569px;top:106.0px;width:1px;height:1.3px;background:#3a3a3a"></div>
<div class="ab" style="left:577px;top:105.7px;width:1px;height:1.6px;background:#3a3a3a"></div>
<div class="ab" style="left:584px;top:106.0px;width:1px;height:1.3px;background:#3a3a3a"></div>
<div class="ab" style="left:599px;top:106.0px;width:1px;height:1.3px;background:#3a3a3a"></div>
<div class="ab" style="left:607px;top:105.7px;width:1px;height:1.6px;background:#3a3a3a"></div>
<div class="ab" style="left:615px;top:106.0px;width:1px;height:1.3px;background:#3a3a3a"></div>
<div class="ab" style="left:622px;top:104.8px;width:1px;height:2.5px;background:#3a3a3a"></div>
<div class="ab" style="left:630px;top:106.0px;width:1px;height:1.3px;background:#3a3a3a"></div>
<div class="ab" style="left:637px;top:105.7px;width:1px;height:1.6px;background:#3a3a3a"></div>
<div class="ab" style="left:645px;top:106.0px;width:1px;height:1.3px;background:#3a3a3a"></div>
<div class="ab" style="left:660px;top:106.0px;width:1px;height:1.3px;background:#3a3a3a"></div>
<div class="ab" style="left:667px;top:105.7px;width:1px;height:1.6px;background:#3a3a3a"></div>
<div class="ab" style="left:675px;top:106.0px;width:1px;height:1.3px;background:#3a3a3a"></div>
<div class="ab" style="left:682px;top:104.8px;width:1px;height:2.5px;background:#3a3a3a"></div>
<div class="ab" style="left:690px;top:106.0px;width:1px;height:1.3px;background:#3a3a3a"></div>
<div class="ab" style="left:698px;top:105.7px;width:1px;height:1.6px;background:#3a3a3a"></div>
<div class="ab" style="left:705px;top:106.0px;width:1px;height:1.3px;background:#3a3a3a"></div>
<div class="ab" style="left:720px;top:106.0px;width:1px;height:1.3px;background:#3a3a3a"></div>
<div class="ab" style="left:728px;top:105.7px;width:1px;height:1.6px;background:#3a3a3a"></div>
<div class="ab" style="left:735px;top:106.0px;width:1px;height:1.3px;background:#3a3a3a"></div>
<div class="ab" style="left:743px;top:104.8px;width:1px;height:2.5px;background:#3a3a3a"></div>
<div class="ab" style="left:750px;top:106.0px;width:1px;height:1.3px;background:#3a3a3a"></div>
<div class="ab" style="left:758px;top:105.7px;width:1px;height:1.6px;background:#3a3a3a"></div>
<div class="t" style="left:740.70px;top:94.20px;font-size:8.4px;color:#2a2a2a;letter-spacing:-0.780px;font-weight:normal;-webkit-text-stroke-width:0.25px">inches</div>
<div class="ab" style="left:193px;top:94px;width:1px;height:2px;background:#222"></div>
<div class="ab" style="left:193px;top:97px;width:1px;height:2px;background:#222"></div>
<div class="ab" style="left:193px;top:100px;width:1px;height:2px;background:#222"></div>
<div class="ab" style="left:193px;top:103px;width:1px;height:2px;background:#222"></div>
<div class="ab" style="left:193px;top:106px;width:1px;height:2px;background:#222"></div>
<svg style="left:27px;top:96px" width="12" height="14" viewBox="0 0 12 14"><path d="M1.5 4.5 h2 M5 4.5 h1.5 M8 4.5 h2" stroke="#222" stroke-width="1.1"/><path d="M3.5 2 v1 M3.5 6 v1 M3.5 9 v1.2" stroke="#333" stroke-width="1"/><path d="M5 6 L8 8.5" stroke="#444" stroke-width="0.9"/><path d="M9.5 7 L8.6 10.4 L6.2 9z" fill="#111"/><path d="M2.5 12.5 h5" stroke="#666" stroke-width="1.3"/></svg>
<div class="ab" style="left:23px;top:108px;width:16px;height:430px;background:#ebeaef"></div>
<div class="ab" style="left:29px;top:108px;width:5px;height:1.5px;background:#555"></div>
<div class="ab" style="left:39px;top:108px;width:1px;height:430px;background:#a9a9b0"></div>
<div class="ab" style="left:34px;top:167.5px;width:4.6px;height:1px;background:#222"></div>
<div class="t" style="left:27.60px;top:172.30px;font-size:7.5px;color:#222;letter-spacing:0.000px;transform:rotate(-90deg);transform-origin:0 0;-webkit-text-stroke-width:0.3px">11</div>
<div class="ab" style="left:34px;top:228.5px;width:4.6px;height:1px;background:#222"></div>
<div class="t" style="left:27.60px;top:233.80px;font-size:7.5px;color:#222;letter-spacing:0.000px;transform:rotate(-90deg);transform-origin:0 0;-webkit-text-stroke-width:0.3px">10</div>
<div class="ab" style="left:34px;top:288.5px;width:4.6px;height:1px;background:#222"></div>
<div class="t" style="left:27.60px;top:291.30px;font-size:7.5px;color:#222;letter-spacing:0.000px;transform:rotate(-90deg);transform-origin:0 0;-webkit-text-stroke-width:0.3px">9</div>
<div class="ab" style="left:34px;top:348.5px;width:4.6px;height:1px;background:#222"></div>
<div class="t" style="left:27.60px;top:351.30px;font-size:7.5px;color:#222;letter-spacing:0.000px;transform:rotate(-90deg);transform-origin:0 0;-webkit-text-stroke-width:0.3px">8</div>
<div class="ab" style="left:34px;top:409.5px;width:4.6px;height:1px;background:#222"></div>
<div class="t" style="left:27.60px;top:412.30px;font-size:7.5px;color:#222;letter-spacing:0.000px;transform:rotate(-90deg);transform-origin:0 0;-webkit-text-stroke-width:0.3px">7</div>
<div class="ab" style="left:34px;top:469.5px;width:4.6px;height:1px;background:#222"></div>
<div class="t" style="left:27.60px;top:472.30px;font-size:7.5px;color:#222;letter-spacing:0.000px;transform:rotate(-90deg);transform-origin:0 0;-webkit-text-stroke-width:0.3px">6</div>
<div class="ab" style="left:37.300000000000004px;top:115px;width:1.3px;height:1px;background:#3a3a3a"></div>
<div class="ab" style="left:37.0px;top:123px;width:1.6px;height:1px;background:#3a3a3a"></div>
<div class="ab" style="left:37.300000000000004px;top:130px;width:1.3px;height:1px;background:#3a3a3a"></div>
<div class="ab" style="left:36.1px;top:138px;width:2.5px;height:1px;background:#3a3a3a"></div>
<div class="ab" style="left:37.300000000000004px;top:146px;width:1.3px;height:1px;background:#3a3a3a"></div>
<div class="ab" style="left:37.0px;top:153px;width:1.6px;height:1px;background:#3a3a3a"></div>
<div class="ab" style="left:37.300000000000004px;top:161px;width:1.3px;height:1px;background:#3a3a3a"></div>
<div class="ab" style="left:37.300000000000004px;top:176px;width:1.3px;height:1px;background:#3a3a3a"></div>
<div class="ab" style="left:37.0px;top:183px;width:1.6px;height:1px;background:#3a3a3a"></div>
<div class="ab" style="left:37.300000000000004px;top:191px;width:1.3px;height:1px;background:#3a3a3a"></div>
<div class="ab" style="left:36.1px;top:198px;width:2.5px;height:1px;background:#3a3a3a"></div>
<div class="ab" style="left:37.300000000000004px;top:206px;width:1.3px;height:1px;background:#3a3a3a"></div>
<div class="ab" style="left:37.0px;top:214px;width:1.6px;height:1px;background:#3a3a3a"></div>
<div class="ab" style="left:37.300000000000004px;top:221px;width:1.3px;height:1px;background:#3a3a3a"></div>
<div class="ab" style="left:37.300000000000004px;top:236px;width:1.3px;height:1px;background:#3a3a3a"></div>
<div class="ab" style="left:37.0px;top:244px;width:1.6px;height:1px;background:#3a3a3a"></div>
<div class="ab" style="left:37.300000000000004px;top:251px;width:1.3px;height:1px;background:#3a3a3a"></div>
<div class="ab" style="left:36.1px;top:259px;width:2.5px;height:1px;background:#3a3a3a"></div>
<div class="ab" style="left:37.300000000000004px;top:266px;width:1.3px;height:1px;background:#3a3a3a"></div>
<div class="ab" style="left:37.0px;top:274px;width:1.6px;height:1px;background:#3a3a3a"></div>
<div class="ab" style="left:37.300000000000004px;top:282px;width:1.3px;height:1px;background:#3a3a3a"></div>
<div class="ab" style="left:37.300000000000004px;top:297px;width:1.3px;height:1px;background:#3a3a3a"></div>
<div class="ab" style="left:37.0px;top:304px;width:1.6px;height:1px;background:#3a3a3a"></div>
<div class="ab" style="left:37.300000000000004px;top:312px;width:1.3px;height:1px;background:#3a3a3a"></div>
<div class="ab" style="left:36.1px;top:319px;width:2.5px;height:1px;background:#3a3a3a"></div>
<div class="ab" style="left:37.300000000000004px;top:327px;width:1.3px;height:1px;background:#3a3a3a"></div>
<div class="ab" style="left:37.0px;top:334px;width:1.6px;height:1px;background:#3a3a3a"></div>
<div class="ab" style="left:37.300000000000004px;top:342px;width:1.3px;height:1px;background:#3a3a3a"></div>
<div class="ab" style="left:37.300000000000004px;top:357px;width:1.3px;height:1px;background:#3a3a3a"></div>
<div class="ab" style="left:37.0px;top:365px;width:1.6px;height:1px;background:#3a3a3a"></div>
<div class="ab" style="left:37.300000000000004px;top:372px;width:1.3px;height:1px;background:#3a3a3a"></div>
<div class="ab" style="left:36.1px;top:380px;width:2.5px;height:1px;background:#3a3a3a"></div>
<div class="ab" style="left:37.300000000000004px;top:387px;width:1.3px;height:1px;background:#3a3a3a"></div>
<div class="ab" style="left:37.0px;top:395px;width:1.6px;height:1px;background:#3a3a3a"></div>
<div class="ab" style="left:37.300000000000004px;top:402px;width:1.3px;height:1px;background:#3a3a3a"></div>
<div class="ab" style="left:37.300000000000004px;top:417px;width:1.3px;height:1px;background:#3a3a3a"></div>
<div class="ab" style="left:37.0px;top:425px;width:1.6px;height:1px;background:#3a3a3a"></div>
<div class="ab" style="left:37.300000000000004px;top:433px;width:1.3px;height:1px;background:#3a3a3a"></div>
<div class="ab" style="left:36.1px;top:440px;width:2.5px;height:1px;background:#3a3a3a"></div>
<div class="ab" style="left:37.300000000000004px;top:448px;width:1.3px;height:1px;background:#3a3a3a"></div>
<div class="ab" style="left:37.0px;top:455px;width:1.6px;height:1px;background:#3a3a3a"></div>
<div class="ab" style="left:37.300000000000004px;top:463px;width:1.3px;height:1px;background:#3a3a3a"></div>
<div class="ab" style="left:37.300000000000004px;top:478px;width:1.3px;height:1px;background:#3a3a3a"></div>
<div class="ab" style="left:37.0px;top:485px;width:1.6px;height:1px;background:#3a3a3a"></div>
<div class="ab" style="left:37.300000000000004px;top:493px;width:1.3px;height:1px;background:#3a3a3a"></div>
<div class="ab" style="left:36.1px;top:501px;width:2.5px;height:1px;background:#3a3a3a"></div>
<div class="ab" style="left:37.300000000000004px;top:508px;width:1.3px;height:1px;background:#3a3a3a"></div>
<div class="ab" style="left:37.0px;top:516px;width:1.6px;height:1px;background:#3a3a3a"></div>
<div class="t" style="left:28.00px;top:537.00px;font-size:8px;color:#222;letter-spacing:-0.460px;transform:rotate(-90deg);transform-origin:0 0;-webkit-text-stroke-width:0.3px">inches</div>
<div class="ab" style="left:26px;top:143px;width:2px;height:1px;background:#222"></div>
<div class="ab" style="left:29px;top:143px;width:2px;height:1px;background:#222"></div>
<div class="ab" style="left:32px;top:143px;width:2px;height:1px;background:#222"></div>
<div class="ab" style="left:35px;top:143px;width:2px;height:1px;background:#222"></div>
<div class="ab" style="left:0px;top:92px;width:23px;height:446px;background:#ebeaee"></div>
<div class="ab" style="left:22px;top:92px;width:1px;height:446px;background:#d4d4da"></div>
<div class="ab" style="left:4px;top:96px;width:1px;height:1px;background:#9a9aa6"></div>
<div class="ab" style="left:7px;top:96px;width:1px;height:1px;background:#9a9aa6"></div>
<div class="ab" style="left:10px;top:96px;width:1px;height:1px;background:#9a9aa6"></div>
<div class="ab" style="left:13px;top:96px;width:1px;height:1px;background:#9a9aa6"></div>
<div class="ab" style="left:16px;top:96px;width:1px;height:1px;background:#9a9aa6"></div>
<div class="ab" style="left:19px;top:96px;width:1px;height:1px;background:#9a9aa6"></div>
<div class="ab" style="left:2px;top:101px;width:19px;height:19px;background:linear-gradient(#bccbe0,#f6f8fb);border:1px solid #7a8aa8;border-radius:2px"></div>
<svg style="left:7px;top:104px" width="9" height="13" viewBox="0 0 9 13"><path d="M0.5 0.5 L0.5 10 L3 7.5 L5 12 L6.5 11.3 L4.5 7 H8z" fill="#fff" stroke="#555"/></svg>
<svg style="left:6px;top:125px" width="11" height="12" viewBox="0 0 11 12"><path d="M3 0.5 Q0 5 2.5 11" fill="none" stroke="#555"/><circle cx="2.5" cy="3" r="1.5" fill="#fff" stroke="#333"/><path d="M5 5 L10 8 L6.5 10z" fill="#111"/></svg>
<svg style="left:16px;top:134px" width="4" height="4" viewBox="0 0 4 4"><path d="M4 0 V4 H0z" fill="#111"/></svg>
<svg style="left:6px;top:145px" width="12" height="10" viewBox="0 0 12 10"><path d="M3 0 V8 H11 M0 2.5 H8 V10" fill="none" stroke="#333" stroke-width="1.4"/><path d="M1 9 L10 1" stroke="#333" stroke-width="1.2"/></svg>
<svg style="left:16px;top:155px" width="4" height="4" viewBox="0 0 4 4"><path d="M4 0 V4 H0z" fill="#111"/></svg>
<svg style="left:5px;top:166.5px" width="15" height="13" viewBox="0 0 15 13"><defs><linearGradient id="zl" x1="0" y1="0" x2="0" y2="1"><stop offset="0" stop-color="#fafafa"/><stop offset="1" stop-color="#c8c8cc"/></linearGradient></defs><ellipse cx="5" cy="4.5" rx="4.3" ry="3.8" fill="url(#zl)" stroke="#666" stroke-width="1"/><path d="M7.5 7.5 L12 11.5" stroke="#333" stroke-width="1.5"/></svg>
<svg style="left:16px;top:175px" width="4" height="4" viewBox="0 0 4 4"><path d="M4 0 V4 H0z" fill="#111"/></svg>
<svg style="left:6px;top:185.5px" width="13" height="12" viewBox="0 0 13 12"><path d="M2.5 0 V5 M0 2.5 H5" stroke="#888" stroke-width="1.1"/><path d="M2 9.5 Q3.5 6 5 8.5 T8 8.5 T11 10" fill="none" stroke="#333" stroke-width="1.1"/></svg>
<svg style="left:16px;top:195px" width="4" height="4" viewBox="0 0 4 4"><path d="M4 0 V4 H0z" fill="#111"/></svg>
<svg style="left:5px;top:205px" width="15" height="14" viewBox="0 0 15 14"><path d="M1 3 L4 0 L8 4 L5 7z" fill="#e8c8a0" stroke="#6a4a2a"/><rect x="6.5" y="6.5" width="7" height="6" fill="#b89a70" stroke="#5a4030"/></svg>
<svg style="left:16px;top:215px" width="4" height="4" viewBox="0 0 4 4"><path d="M4 0 V4 H0z" fill="#111"/></svg>
<svg style="left:6px;top:228px" width="11" height="11" viewBox="0 0 11 11"><rect x="0.5" y="0.5" width="10" height="10" fill="#f6f6f8" stroke="#555"/><rect x="1" y="5" width="9" height="5" fill="#d8d8dc"/></svg>
<svg style="left:16px;top:236px" width="4" height="4" viewBox="0 0 4 4"><path d="M4 0 V4 H0z" fill="#111"/></svg>
<svg style="left:6px;top:248px" width="11" height="11" viewBox="0 0 11 11"><circle cx="5.5" cy="5.5" r="5" fill="#f4f4f6" stroke="#555"/></svg>
<svg style="left:16px;top:256px" width="4" height="4" viewBox="0 0 4 4"><path d="M4 0 V4 H0z" fill="#111"/></svg>
<svg style="left:6px;top:270px" width="11" height="11" viewBox="0 0 11 11"><path d="M5.5 0.5 L7 4 L10.5 4 L7.8 6.5 L9 10.5 L5.5 8 L2 10.5 L3.2 6.5 L0.5 4 L4 4z" fill="#f6f6f8" stroke="#555"/></svg>
<svg style="left:16px;top:277px" width="4" height="4" viewBox="0 0 4 4"><path d="M4 0 V4 H0z" fill="#111"/></svg>
<svg style="left:6px;top:288px" width="14" height="12" viewBox="0 0 14 12"><circle cx="5" cy="4" r="3.5" fill="#f6f6f8" stroke="#555"/><rect x="0.5" y="4.5" width="6" height="5" fill="#e8e8ec" stroke="#555"/><rect x="5.5" y="5.5" width="6" height="6" fill="#f6f6f8" stroke="#555"/></svg>
<svg style="left:16px;top:297px" width="4" height="4" viewBox="0 0 4 4"><path d="M4 0 V4 H0z" fill="#111"/></svg>
<svg style="left:6px;top:309px" width="12" height="11" viewBox="0 0 12 11"><path d="M0.5 10.5 L4.5 0.5 H7.5 L11.5 10.5 H8.5 L7.8 8 H4.2 L3.5 10.5z M4.8 6 H7.2 L6 2.5z" fill="#f0f0f2" stroke="#666"/></svg>
<svg style="left:6px;top:330px" width="12" height="10" viewBox="0 0 12 10"><rect x="0.5" y="0.5" width="11" height="9" fill="#fafafa" stroke="#555"/><path d="M0.5 3.5 H11.5 M0.5 6.5 H11.5 M4.5 0.5 V9.5 M8 0.5 V9.5" stroke="#555"/></svg>
<svg style="left:5px;top:348px" width="15" height="14" viewBox="0 0 15 14"><rect x="0.5" y="0.5" width="5.5" height="5.5" fill="#f4ece4" stroke="#9a8a80"/><rect x="3" y="3" width="5.5" height="5.5" fill="#f8c890" stroke="#c89060"/><rect x="5.8" y="5.8" width="6" height="6" fill="#ec7418" stroke="#a04010"/></svg>
<svg style="left:16px;top:358px" width="4" height="4" viewBox="0 0 4 4"><path d="M4 0 V4 H0z" fill="#111"/></svg>
<svg style="left:6px;top:368px" width="12" height="13" viewBox="0 0 12 13"><path d="M0.8 12 L7 5.5 L8.5 7 L2 12.8z" fill="#6a6e78"/><path d="M6 4.5 L9 7.5" stroke="#222a36" stroke-width="2"/><ellipse cx="9.3" cy="3.3" rx="2.6" ry="1.9" transform="rotate(-45 9.3 3.3)" fill="#2a303c"/></svg>
<svg style="left:16px;top:378px" width="4" height="4" viewBox="0 0 4 4"><path d="M4 0 V4 H0z" fill="#111"/></svg>
<svg style="left:7px;top:389px" width="9" height="12" viewBox="0 0 9 12"><path d="M4.5 0.5 L7.8 6 L6.5 8.8 H2.5 L1.2 6z" fill="#f8f8fa" stroke="#606068" stroke-width="0.9"/><circle cx="4.5" cy="5.5" r="0.9" fill="#555"/><path d="M4.5 1.5 V4.5" stroke="#777" stroke-width="0.7"/><rect x="1.5" y="9.5" width="6" height="1.6" fill="#3a3a44"/></svg>
<svg style="left:16px;top:397px" width="4" height="4" viewBox="0 0 4 4"><path d="M4 0 V4 H0z" fill="#111"/></svg>
<svg style="left:5px;top:409px" width="15" height="13" viewBox="0 0 15 13"><defs><linearGradient id="fb" x1="0" y1="0" x2="0" y2="1"><stop offset="0" stop-color="#f0b850"/><stop offset="1" stop-color="#b87818"/></linearGradient></defs><path d="M1.5 6 L6.5 1 L12 6.5 L7 11.5z" fill="#fdfdfd" stroke="#707070"/><path d="M1.8 6.3 L7 11.5 L11.7 6.8 Q6.5 8.5 1.8 6.3z" fill="url(#fb)"/><path d="M6.5 1 L5 0" stroke="#666"/></svg>
<svg style="left:16px;top:418px" width="4" height="4" viewBox="0 0 4 4"><path d="M4 0 V4 H0z" fill="#111"/></svg>
<svg style="left:6px;top:429px" width="14" height="14" viewBox="0 0 14 14"><path d="M2 3.5 L4.8 0.7 L7.6 3.5 L4.8 6.3z" fill="#b8b8c0" stroke="#6a6a72" stroke-width="0.9"/><ellipse cx="8.5" cy="9.3" rx="4" ry="3.2" fill="#f2e0a0"/><path d="M4.5 6.5 L7 9" stroke="#e8c870" stroke-width="1.5"/></svg>
<svg style="left:16px;top:439px" width="4" height="4" viewBox="0 0 4 4"><path d="M4 0 V4 H0z" fill="#111"/></svg>
<div class="ab" style="left:40px;top:109px;width:709px;height:416px;background:#fff"></div>
<div class="ab" style="left:108px;top:168px;width:514px;height:357px;border:1px solid #8e8e8e;border-bottom:none;background:#fff"></div>
<div class="ab" style="left:622px;top:171px;width:5px;height:354px;background:#a6a6a6"></div>
<svg style="left:0;top:0" width="800" height="577" viewBox="0 0 800 577"><g fill="none" stroke="#5e5e5e" stroke-width="1" stroke-linejoin="miter"><path d="M177.55 227.90 L179.55 235.50 L187.05 235.50 L181.05 240.80 L183.65 249.40 L177.55 244.50 L171.45 249.40 L174.05 240.80 L168.05 235.50 L175.55 235.50Z"/><path d="M198.70 227.90 L200.70 235.50 L208.20 235.50 L202.20 240.80 L204.80 249.40 L198.70 244.50 L192.60 249.40 L195.20 240.80 L189.20 235.50 L196.70 235.50Z"/><path d="M219.85 227.90 L221.85 235.50 L229.35 235.50 L223.35 240.80 L225.95 249.40 L219.85 244.50 L213.75 249.40 L216.35 240.80 L210.35 235.50 L217.85 235.50Z"/><path d="M241.00 227.90 L243.00 235.50 L250.50 235.50 L244.50 240.80 L247.10 249.40 L241.00 244.50 L234.90 249.40 L237.50 240.80 L231.50 235.50 L239.00 235.50Z"/><path d="M262.15 227.90 L264.15 235.50 L271.65 235.50 L265.65 240.80 L268.25 249.40 L262.15 244.50 L256.05 249.40 L258.65 240.80 L252.65 235.50 L260.15 235.50Z"/><path d="M283.30 227.90 L285.30 235.50 L292.80 235.50 L286.80 240.80 L289.40 249.40 L283.30 244.50 L277.20 249.40 L279.80 240.80 L273.80 235.50 L281.30 235.50Z"/><path d="M177.55 252.65 L179.55 260.25 L187.05 260.25 L181.05 265.55 L183.65 274.15 L177.55 269.25 L171.45 274.15 L174.05 265.55 L168.05 260.25 L175.55 260.25Z"/><path d="M198.70 252.65 L200.70 260.25 L208.20 260.25 L202.20 265.55 L204.80 274.15 L198.70 269.25 L192.60 274.15 L195.20 265.55 L189.20 260.25 L196.70 260.25Z"/><path d="M219.85 252.65 L221.85 260.25 L229.35 260.25 L223.35 265.55 L225.95 274.15 L219.85 269.25 L213.75 274.15 L216.35 265.55 L210.35 260.25 L217.85 260.25Z"/><path d="M241.00 252.65 L243.00 260.25 L250.50 260.25 L244.50 265.55 L247.10 274.15 L241.00 269.25 L234.90 274.15 L237.50 265.55 L231.50 260.25 L239.00 260.25Z"/><path d="M262.15 252.65 L264.15 260.25 L271.65 260.25 L265.65 265.55 L268.25 274.15 L262.15 269.25 L256.05 274.15 L258.65 265.55 L252.65 260.25 L260.15 260.25Z"/><path d="M283.30 252.65 L285.30 260.25 L292.80 260.25 L286.80 265.55 L289.40 274.15 L283.30 269.25 L277.20 274.15 L279.80 265.55 L273.80 260.25 L281.30 260.25Z"/><path d="M177.55 277.40 L179.55 285.00 L187.05 285.00 L181.05 290.30 L183.65 298.90 L177.55 294.00 L171.45 298.90 L174.05 290.30 L168.05 285.00 L175.55 285.00Z"/><path d="M198.70 277.40 L200.70 285.00 L208.20 285.00 L202.20 290.30 L204.80 298.90 L198.70 294.00 L192.60 298.90 L195.20 290.30 L189.20 285.00 L196.70 285.00Z"/><path d="M219.85 277.40 L221.85 285.00 L229.35 285.00 L223.35 290.30 L225.95 298.90 L219.85 294.00 L213.75 298.90 L216.35 290.30 L210.35 285.00 L217.85 285.00Z"/><path d="M241.00 277.40 L243.00 285.00 L250.50 285.00 L244.50 290.30 L247.10 298.90 L241.00 294.00 L234.90 298.90 L237.50 290.30 L231.50 285.00 L239.00 285.00Z"/><path d="M262.15 277.40 L264.15 285.00 L271.65 285.00 L265.65 290.30 L268.25 298.90 L262.15 294.00 L256.05 298.90 L258.65 290.30 L252.65 285.00 L260.15 285.00Z"/><path d="M283.30 277.40 L285.30 285.00 L292.80 285.00 L286.80 290.30 L289.40 298.90 L283.30 294.00 L277.20 298.90 L279.80 290.30 L273.80 285.00 L281.30 285.00Z"/><path d="M177.55 302.15 L179.55 309.75 L187.05 309.75 L181.05 315.05 L183.65 323.65 L177.55 318.75 L171.45 323.65 L174.05 315.05 L168.05 309.75 L175.55 309.75Z"/><path d="M198.70 302.15 L200.70 309.75 L208.20 309.75 L202.20 315.05 L204.80 323.65 L198.70 318.75 L192.60 323.65 L195.20 315.05 L189.20 309.75 L196.70 309.75Z"/><path d="M219.85 302.15 L221.85 309.75 L229.35 309.75 L223.35 315.05 L225.95 323.65 L219.85 318.75 L213.75 323.65 L216.35 315.05 L210.35 309.75 L217.85 309.75Z"/><path d="M241.00 302.15 L243.00 309.75 L250.50 309.75 L244.50 315.05 L247.10 323.65 L241.00 318.75 L234.90 323.65 L237.50 315.05 L231.50 309.75 L239.00 309.75Z"/><path d="M262.15 302.15 L264.15 309.75 L271.65 309.75 L265.65 315.05 L268.25 323.65 L262.15 318.75 L256.05 323.65 L258.65 315.05 L252.65 309.75 L260.15 309.75Z"/><path d="M283.30 302.15 L285.30 309.75 L292.80 309.75 L286.80 315.05 L289.40 323.65 L283.30 318.75 L277.20 323.65 L279.80 315.05 L273.80 309.75 L281.30 309.75Z"/><path d="M177.55 326.90 L179.55 334.50 L187.05 334.50 L181.05 339.80 L183.65 348.40 L177.55 343.50 L171.45 348.40 L174.05 339.80 L168.05 334.50 L175.55 334.50Z"/><path d="M198.70 326.90 L200.70 334.50 L208.20 334.50 L202.20 339.80 L204.80 348.40 L198.70 343.50 L192.60 348.40 L195.20 339.80 L189.20 334.50 L196.70 334.50Z"/><path d="M219.85 326.90 L221.85 334.50 L229.35 334.50 L223.35 339.80 L225.95 348.40 L219.85 343.50 L213.75 348.40 L216.35 339.80 L210.35 334.50 L217.85 334.50Z"/><path d="M241.00 326.90 L243.00 334.50 L250.50 334.50 L244.50 339.80 L247.10 348.40 L241.00 343.50 L234.90 348.40 L237.50 339.80 L231.50 334.50 L239.00 334.50Z"/><path d="M262.15 326.90 L264.15 334.50 L271.65 334.50 L265.65 339.80 L268.25 348.40 L262.15 343.50 L256.05 348.40 L258.65 339.80 L252.65 334.50 L260.15 334.50Z"/><path d="M283.30 326.90 L285.30 334.50 L292.80 334.50 L286.80 339.80 L289.40 348.40 L283.30 343.50 L277.20 348.40 L279.80 339.80 L273.80 334.50 L281.30 334.50Z"/><path d="M177.55 351.65 L179.55 359.25 L187.05 359.25 L181.05 364.55 L183.65 373.15 L177.55 368.25 L171.45 373.15 L174.05 364.55 L168.05 359.25 L175.55 359.25Z"/><path d="M198.70 351.65 L200.70 359.25 L208.20 359.25 L202.20 364.55 L204.80 373.15 L198.70 368.25 L192.60 373.15 L195.20 364.55 L189.20 359.25 L196.70 359.25Z"/><path d="M219.85 351.65 L221.85 359.25 L229.35 359.25 L223.35 364.55 L225.95 373.15 L219.85 368.25 L213.75 373.15 L216.35 364.55 L210.35 359.25 L217.85 359.25Z"/><path d="M241.00 351.65 L243.00 359.25 L250.50 359.25 L244.50 364.55 L247.10 373.15 L241.00 368.25 L234.90 373.15 L237.50 364.55 L231.50 359.25 L239.00 359.25Z"/><path d="M262.15 351.65 L264.15 359.25 L271.65 359.25 L265.65 364.55 L268.25 373.15 L262.15 368.25 L256.05 373.15 L258.65 364.55 L252.65 359.25 L260.15 359.25Z"/><path d="M283.30 351.65 L285.30 359.25 L292.80 359.25 L286.80 364.55 L289.40 373.15 L283.30 368.25 L277.20 373.15 L279.80 364.55 L273.80 359.25 L281.30 359.25Z"/></g><ellipse cx="452" cy="294.6" rx="82.6" ry="38.2" fill="#231f1b"/></svg>
<div class="ab" style="left:749px;top:109px;width:15px;height:416px;background:linear-gradient(90deg,#f4f8fc,#ffffff 30%,#dfeaf6)"></div>
<div class="ab" style="left:750px;top:108px;width:13px;height:14px;background:linear-gradient(#eef3f9,#cfdcec);border:1px solid #8a96aa;border-radius:2px"></div>
<svg style="left:752.5px;top:112.5px" width="8" height="5" viewBox="0 0 8 5"><path d="M0.5 4.5 L4 1 L7.5 4.5" fill="none" stroke="#34425e" stroke-width="1.8"/></svg>
<div class="ab" style="left:750.5px;top:209px;width:12px;height:113px;background:linear-gradient(90deg,#c8daf0,#eaf2fb 60%,#cfe0f2);border:1px solid #8aa0bc;border-radius:2px"></div>
<div class="ab" style="left:754px;top:263px;width:4.5px;height:1px;background:#7f90aa"></div>
<div class="ab" style="left:754px;top:265.5px;width:4.5px;height:1px;background:#7f90aa"></div>
<div class="ab" style="left:754px;top:268px;width:4.5px;height:1px;background:#7f90aa"></div>
<div class="ab" style="left:750.5px;top:511.5px;width:12px;height:13px;background:linear-gradient(#e8eef6,#c8d8ea);border:1px solid #9aaac0;border-radius:2px"></div>
<svg style="left:753px;top:516px" width="8" height="5" viewBox="0 0 8 5"><path d="M0.5 0.5 L4 4 L7.5 0.5" fill="none" stroke="#1e3260" stroke-width="1.8"/></svg>
<div class="ab" style="left:764px;top:92px;width:21px;height:446px;background:#ebeaee;border-left:1px solid #d4d4da"></div>
<div class="ab" style="left:784px;top:92px;width:1px;height:446px;background:#d4d4da"></div>
<svg style="left:768px;top:97px" width="8" height="6" viewBox="0 0 8 6"><path d="M3.5 0.5 L1 3 L3.5 5.5 M7 0.5 L4.5 3 L7 5.5" fill="none" stroke="#444" stroke-width="1.2"/></svg>
<div class="ab" style="left:765px;top:110.5px;width:17px;height:86.5px;background:#e6e5ea;border:1px solid #d0d0d8;border-radius:3px"></div>
<div class="ab" style="left:765px;top:197px;width:17px;height:51px;background:#e6e5ea;border:1px solid #d0d0d8;border-radius:3px"></div>
<div class="ab" style="left:765px;top:248px;width:17px;height:42.5px;background:#e6e5ea;border:1px solid #d0d0d8;border-radius:3px"></div>
<div class="ab" style="left:765px;top:290.5px;width:17px;height:100.5px;background:#f6f6f8;border:1px solid #d0d0d8;border-radius:3px"></div>
<div class="ab" style="left:765px;top:391px;width:18px;height:147px;background:linear-gradient(90deg,#e6e5ea,#efeef2);border-left:1px solid #d0d0d8"></div>
<div class="t" style="left:778.80px;top:130.00px;font-size:9.6px;color:#6a6a6a;letter-spacing:-0.607px;transform:rotate(90deg);transform-origin:0 0">Step and Repeat</div>
<div class="t" style="left:778.80px;top:214.50px;font-size:9.6px;color:#6a6a6a;letter-spacing:-0.117px;transform:rotate(90deg);transform-origin:0 0">Contour</div>
<div class="t" style="left:778.80px;top:267.40px;font-size:9.6px;color:#6a6a6a;letter-spacing:-0.650px;transform:rotate(90deg);transform-origin:0 0">Blend</div>
<div class="t" style="left:781.50px;top:310.00px;font-size:9.6px;color:#1a1a1a;letter-spacing:-0.585px;transform:rotate(90deg);transform-origin:0 0">Object Manager</div>
<svg style="left:767px;top:115px" width="14" height="14" viewBox="0 0 14 14"><rect x="0.5" y="0.5" width="5.5" height="5" rx="1" fill="#f4f4f6" stroke="#666"/><rect x="7.5" y="7.5" width="5.5" height="5" rx="1" fill="#f4f4f6" stroke="#666"/><path d="M6 5 L8 7 M8 5.5 V7 H6.5" fill="none" stroke="#333" stroke-width="0.9"/></svg>
<svg style="left:767px;top:199.5px" width="13" height="12.5" viewBox="0 0 13 12.5"><defs><radialGradient id="cg"><stop offset="0" stop-color="#fafafa"/><stop offset="1" stop-color="#c4c4ca"/></radialGradient></defs><rect x="0.5" y="0.5" width="12" height="11.5" rx="1.5" fill="url(#cg)" stroke="#8a8a90"/><rect x="4.5" y="4.3" width="4" height="4" fill="#fff" stroke="#888" stroke-width="0.9"/></svg>
<svg style="left:767px;top:250px" width="13" height="14" viewBox="0 0 13 14"><rect x="5.5" y="0.5" width="6" height="6" fill="#fff" stroke="#555"/><rect x="3" y="3" width="6" height="6" fill="#fff" stroke="#555"/><rect x="0.5" y="6.5" width="6" height="6" fill="#fff" stroke="#555"/></svg>
<svg style="left:767px;top:293px" width="13" height="13" viewBox="0 0 13 13"><rect x="0.5" y="0.5" width="4" height="4" fill="#666"/><path d="M2 5 V12" stroke="#666" stroke-dasharray="1 1"/><rect x="7" y="2" width="5" height="4" fill="#444"/><rect x="7" y="8" width="5" height="3" fill="#444"/></svg>
<svg style="left:771.5px;top:378.5px" width="7" height="7" viewBox="0 0 7 7"><path d="M0.5 0.5 L6.5 6.5 M6.5 0.5 L0.5 6.5" stroke="#8a8a70" stroke-width="1.4"/></svg>
<div class="ab" style="left:785px;top:92px;width:15px;height:446px;background:#ebeaee"></div>
<div class="ab" style="left:789px;top:96px;width:1px;height:1px;background:#9a9aa6"></div>
<div class="ab" style="left:792px;top:96px;width:1px;height:1px;background:#9a9aa6"></div>
<div class="ab" style="left:795px;top:96px;width:1px;height:1px;background:#9a9aa6"></div>
<div class="ab" style="left:788px;top:100.5px;width:12px;height:12px;border-radius:50%;background:radial-gradient(#fff 40%,#dcdce0);border:1px solid #c4c4ca"></div>
<svg style="left:792px;top:104px" width="4" height="5" viewBox="0 0 4 5"><path d="M0 0 V5 L4 2.5z" fill="#111"/></svg>
<div class="ab" style="left:786px;top:113px;width:13px;height:12px;background:linear-gradient(#f0f4fa,#d8e4f2)"></div>
<svg style="left:789px;top:117px" width="7" height="4" viewBox="0 0 7 4"><path d="M0.5 3.5 L3.5 0.5 L6.5 3.5" fill="none" stroke="#a8bcd8" stroke-width="1.5"/></svg>
<div class="ab" style="left:785px;top:126px;width:14px;height:13.28px;background:#fff;border:1px solid #333"></div>
<svg style="left:785px;top:126px" width="14" height="13.28" viewBox="0 0 14 13.28"><path d="M1 1 L13 12.28 M13 1 L1 12.28" stroke="#111" stroke-width="1"/></svg>
<div class="ab" style="left:785px;top:139.28px;width:14px;height:13.58px;background:#1c1c1c"></div>
<div class="ab" style="left:785px;top:139.28px;width:14px;height:1px;background:rgba(255,255,255,0.22)"></div>
<div class="ab" style="left:785px;top:152.56px;width:14px;height:13.58px;background:#2c2c2c"></div>
<div class="ab" style="left:785px;top:152.56px;width:14px;height:1px;background:rgba(255,255,255,0.22)"></div>
<div class="ab" style="left:785px;top:165.84px;width:14px;height:13.58px;background:#3b4040"></div>
<div class="ab" style="left:785px;top:165.84px;width:14px;height:1px;background:rgba(255,255,255,0.22)"></div>
<div class="ab" style="left:785px;top:179.12px;width:14px;height:13.58px;background:#4d5252"></div>
<div class="ab" style="left:785px;top:179.12px;width:14px;height:1px;background:rgba(255,255,255,0.22)"></div>
<div class="ab" style="left:785px;top:192.39999999999998px;width:14px;height:13.58px;background:#626565"></div>
<div class="ab" style="left:785px;top:192.39999999999998px;width:14px;height:1px;background:rgba(255,255,255,0.22)"></div>
<div class="ab" style="left:785px;top:205.68px;width:14px;height:13.58px;background:#7a7c7c"></div>
<div class="ab" style="left:785px;top:205.68px;width:14px;height:1px;background:rgba(255,255,255,0.22)"></div>
<div class="ab" style="left:785px;top:218.95999999999998px;width:14px;height:13.58px;background:#939393"></div>
<div class="ab" style="left:785px;top:218.95999999999998px;width:14px;height:1px;background:rgba(255,255,255,0.22)"></div>
<div class="ab" style="left:785px;top:232.24px;width:14px;height:13.58px;background:#aaaaaa"></div>
<div class="ab" style="left:785px;top:232.24px;width:14px;height:1px;background:rgba(255,255,255,0.22)"></div>
<div class="ab" style="left:785px;top:245.51999999999998px;width:14px;height:13.58px;background:#c3c3c3"></div>
<div class="ab" style="left:785px;top:245.51999999999998px;width:14px;height:1px;background:rgba(255,255,255,0.22)"></div>
<div class="ab" style="left:785px;top:258.79999999999995px;width:14px;height:13.58px;background:#dedede"></div>
<div class="ab" style="left:785px;top:258.79999999999995px;width:14px;height:1px;background:rgba(255,255,255,0.22)"></div>
<div class="ab" style="left:786.5px;top:273.08px;width:11.5px;height:11.28px;background:#fff;border:1.3px solid #444"></div>
<div class="ab" style="left:785px;top:285.36px;width:14px;height:13.58px;background:#2e1a8c"></div>
<div class="ab" style="left:785px;top:285.36px;width:14px;height:1px;background:rgba(255,255,255,0.22)"></div>
<div class="ab" style="left:785px;top:298.64px;width:14px;height:13.58px;background:#16a6b0"></div>
<div class="ab" style="left:785px;top:298.64px;width:14px;height:1px;background:rgba(255,255,255,0.22)"></div>
<div class="ab" style="left:785px;top:311.91999999999996px;width:14px;height:13.58px;background:#0c9a48"></div>
<div class="ab" style="left:785px;top:311.91999999999996px;width:14px;height:1px;background:rgba(255,255,255,0.22)"></div>
<div class="ab" style="left:785px;top:325.2px;width:14px;height:13.58px;background:#f4ec00"></div>
<div class="ab" style="left:785px;top:325.2px;width:14px;height:1px;background:rgba(255,255,255,0.22)"></div>
<div class="ab" style="left:785px;top:338.48px;width:14px;height:13.58px;background:#f0461a"></div>
<div class="ab" style="left:785px;top:338.48px;width:14px;height:1px;background:rgba(255,255,255,0.22)"></div>
<div class="ab" style="left:785px;top:351.76px;width:14px;height:13.58px;background:#b4267a"></div>
<div class="ab" style="left:785px;top:351.76px;width:14px;height:1px;background:rgba(255,255,255,0.22)"></div>
<div class="ab" style="left:785px;top:365.03999999999996px;width:14px;height:13.58px;background:#7a2a8c"></div>
<div class="ab" style="left:785px;top:365.03999999999996px;width:14px;height:1px;background:rgba(255,255,255,0.22)"></div>
<div class="ab" style="left:785px;top:378.32px;width:14px;height:13.58px;background:#f47214"></div>
<div class="ab" style="left:785px;top:378.32px;width:14px;height:1px;background:rgba(255,255,255,0.22)"></div>
<div class="ab" style="left:785px;top:391.59999999999997px;width:14px;height:13.58px;background:#f28aaa"></div>
<div class="ab" style="left:785px;top:391.59999999999997px;width:14px;height:1px;background:rgba(255,255,255,0.22)"></div>
<div class="ab" style="left:785px;top:404.88px;width:14px;height:13.58px;background:#7e3a30"></div>
<div class="ab" style="left:785px;top:404.88px;width:14px;height:1px;background:rgba(255,255,255,0.22)"></div>
<div class="ab" style="left:785px;top:418.15999999999997px;width:14px;height:13.58px;background:#a9b2e0"></div>
<div class="ab" style="left:785px;top:418.15999999999997px;width:14px;height:1px;background:rgba(255,255,255,0.22)"></div>
<div class="ab" style="left:785px;top:431.44px;width:14px;height:13.58px;background:#4a72c4"></div>
<div class="ab" style="left:785px;top:431.44px;width:14px;height:1px;background:rgba(255,255,255,0.22)"></div>
<div class="ab" style="left:785px;top:444.71999999999997px;width:14px;height:13.58px;background:#0c84cc"></div>
<div class="ab" style="left:785px;top:444.71999999999997px;width:14px;height:1px;background:rgba(255,255,255,0.22)"></div>
<div class="ab" style="left:785px;top:458.0px;width:14px;height:13.58px;background:#2e3594"></div>
<div class="ab" style="left:785px;top:458.0px;width:14px;height:1px;background:rgba(255,255,255,0.22)"></div>
<div class="ab" style="left:785px;top:471.28px;width:14px;height:13.58px;background:#1f70b0"></div>
<div class="ab" style="left:785px;top:471.28px;width:14px;height:1px;background:rgba(255,255,255,0.22)"></div>
<div class="ab" style="left:785px;top:484.56px;width:14px;height:13.58px;background:#2b3390"></div>
<div class="ab" style="left:785px;top:484.56px;width:14px;height:1px;background:rgba(255,255,255,0.22)"></div>
<div class="ab" style="left:785px;top:497.84px;width:14px;height:13.58px;background:#3c1a88"></div>
<div class="ab" style="left:785px;top:497.84px;width:14px;height:1px;background:rgba(255,255,255,0.22)"></div>
<div class="ab" style="left:786.5px;top:512.4px;width:12.5px;height:12px;background:linear-gradient(#e8eef6,#c8d8ea);border:1px solid #9aaac0;border-radius:2px"></div>
<svg style="left:789px;top:516px" width="7" height="5" viewBox="0 0 7 5"><path d="M0.5 0.5 L3.5 3.5 L6.5 0.5" fill="none" stroke="#1e3260" stroke-width="1.6"/></svg>
<svg style="left:789px;top:529px" width="6" height="8" viewBox="0 0 6 8"><path d="M0.5 0 V8" stroke="#111" stroke-width="1.3"/><path d="M6 0 V8 L2 4z" fill="#111"/></svg>
<div class="ab" style="left:39px;top:524.5px;width:710px;height:13.5px;background:#ebeaef;border-top:1px solid #c4c4cc"></div>
<div class="ab" style="left:108px;top:168px;width:1px;height:357px;background:#8e8e8e"></div>
<svg style="left:42px;top:527px" width="8" height="10" viewBox="0 0 8 10"><path d="M0.5 0.5 h5 l2 2 v7 h-7z" fill="#fff" stroke="#222"/><path d="M2 5.5 h4 M4 3.5 v4" stroke="#222"/></svg>
<svg style="left:56px;top:528px" width="6" height="8" viewBox="0 0 6 8"><path d="M0.5 0 V8" stroke="#999"/><path d="M6 0 V8 L2 4z" fill="#999"/></svg>
<svg style="left:71px;top:528px" width="5" height="8" viewBox="0 0 5 8"><path d="M5 0 V8 L1 4z" fill="#999"/></svg>
<div class="t" style="left:93.40px;top:527.60px;font-size:9px;color:#262626;letter-spacing:0.680px;font-weight:normal;">1 of 1</div>
<svg style="left:138px;top:528px" width="5" height="8" viewBox="0 0 5 8"><path d="M0 0 V8 L4 4z" fill="#999"/></svg>
<svg style="left:150px;top:528px" width="6" height="8" viewBox="0 0 6 8"><path d="M0 0 V8 L4 4z" fill="#999"/><path d="M5.5 0 V8" stroke="#999"/></svg>
<svg style="left:162px;top:527px" width="8" height="10" viewBox="0 0 8 10"><path d="M0.5 0.5 h5 l2 2 v7 h-7z" fill="#fff" stroke="#222"/><path d="M2 5.5 h4 M4 3.5 v4" stroke="#222"/></svg>
<svg style="left:173px;top:525px" width="57" height="14" viewBox="0 0 57 14"><path d="M0.5 0.5 H50.5 L54.8 5 V13.5 H0.5z" fill="#fafafb"/><path d="M0.5 13 V0.5 M50.5 0.5 L54.8 5 V13" fill="none" stroke="#b4b4bc"/></svg>
<div class="t" style="left:186.00px;top:527.00px;font-size:9px;color:#222;letter-spacing:0.300px;font-weight:normal;">Page 1</div>
<div class="ab" style="left:399px;top:527px;width:1px;height:1px;background:#888"></div>
<div class="ab" style="left:399px;top:530px;width:1px;height:1px;background:#888"></div>
<div class="ab" style="left:399px;top:533px;width:1px;height:1px;background:#888"></div>
<div class="ab" style="left:399px;top:536px;width:1px;height:1px;background:#888"></div>
<div class="ab" style="left:402px;top:525.5px;width:14px;height:12px;background:linear-gradient(#e8eef6,#c8d8ea);border:1px solid #9aaac0;border-radius:2px"></div>
<svg style="left:406px;top:528px" width="5" height="7" viewBox="0 0 5 7"><path d="M4.5 0.5 L1 3.5 L4.5 6.5" fill="none" stroke="#1e3260" stroke-width="1.8"/></svg>
<div class="ab" style="left:416px;top:525.5px;width:321px;height:12px;background:linear-gradient(#ffffff,#dfeaf6)"></div>
<div class="ab" style="left:487px;top:525.5px;width:194px;height:12px;background:linear-gradient(#eaf2fb,#c6d9ef);border:1px solid #8aa0bc;border-radius:2px"></div>
<div class="ab" style="left:582px;top:529px;width:1px;height:5px;background:#7a8aa0"></div>
<div class="ab" style="left:584px;top:529px;width:1px;height:5px;background:#7a8aa0"></div>
<div class="ab" style="left:586px;top:529px;width:1px;height:5px;background:#7a8aa0"></div>
<div class="ab" style="left:737px;top:525.5px;width:12px;height:12px;background:linear-gradient(#e8eef6,#c8d8ea);border:1px solid #9aaac0;border-radius:2px"></div>
<svg style="left:741px;top:528px" width="5" height="7" viewBox="0 0 5 7"><path d="M0.5 0.5 L4 3.5 L0.5 6.5" fill="none" stroke="#1e3260" stroke-width="1.8"/></svg>
<svg style="left:751px;top:526px" width="11" height="11" viewBox="0 0 11 11"><circle cx="4.5" cy="4.5" r="3.8" fill="none" stroke="#444" stroke-width="1.1"/><circle cx="4.5" cy="4.5" r="1.6" fill="none" stroke="#444"/><path d="M7 7 L10.5 10.5" stroke="#333" stroke-width="1.6"/></svg>
<div class="ab" style="left:0px;top:538px;width:800px;height:35px;background:#ebeaee;border-top:1px solid #f6f6f8"></div>
<div class="t" style="left:3.50px;top:560.00px;font-size:9px;color:#262626;letter-spacing:-0.029px;font-weight:normal;">( 1.394 , 11.418 )</div>
<div class="t" style="left:93.00px;top:560.20px;font-size:9px;color:#262626;letter-spacing:-0.251px;font-weight:normal;">Next click for Drag/Scale; Second click for Rotate/Skew; Dbl-clicking tool selects all objects; Shift+click multi-selects; Alt+click digs</div>
<svg style="left:640px;top:543px" width="13" height="12" viewBox="0 0 13 12"><path d="M1 5.5 L5.5 1 L11 6.5 L6.5 11z" fill="#fafafa" stroke="#5a5a5a" stroke-width="1"/><path d="M1.5 6 L6.5 11 L10.7 6.8 Q6 8.5 1.5 6z" fill="#e08a20"/><path d="M1.5 6 Q6 8 10.7 6.8" fill="none" stroke="#b86a10"/><path d="M11.5 7 Q13 9 12 10.5" fill="none" stroke="#e8a040" stroke-width="1.2"/><path d="M4 3 L2.5 0.5" stroke="#555"/></svg>
<div class="ab" style="left:656px;top:542px;width:14px;height:14px;background:#fff;border:1px solid #222"></div>
<svg style="left:656px;top:542px" width="14" height="14" viewBox="0 0 14 14"><path d="M1 1 L13 13 M13 1 L1 13" stroke="#111" stroke-width="1"/></svg>
<svg style="left:644px;top:559px" width="7" height="12" viewBox="0 0 7 12"><path d="M3.5 0.5 L6.5 5 L5 8 H2 L0.5 5z" fill="#fff" stroke="#444"/><rect x="1" y="9.5" width="5" height="2" fill="#444"/></svg>
<div class="ab" style="left:656px;top:558px;width:14px;height:13px;background:#231f1b;border:1px solid #111"></div>
<div class="ab" style="left:0px;top:572px;width:800px;height:1px;background:#f8f8fa"></div>
<div class="ab" style="left:0px;top:573px;width:800px;height:4px;background:linear-gradient(#23262c,#3c4048 50%,#50545c)"></div>
</body></html>
